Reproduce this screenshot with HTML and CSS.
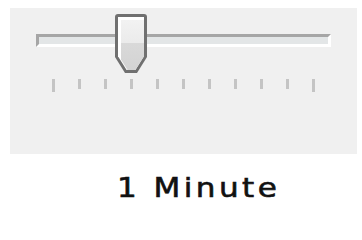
FILE: index.html
```
<!DOCTYPE html>
<html>
<head>
<meta charset="utf-8">
<link rel="stylesheet" href="styles.css">
</head>
<body>
<div class="panel">
  <div class="track"></div>
  <div class="ticks">
    <span class="tick long"></span><span class="tick"></span><span class="tick"></span><span class="tick"></span><span class="tick"></span><span class="tick"></span><span class="tick"></span><span class="tick"></span><span class="tick"></span><span class="tick"></span><span class="tick long"></span>
  </div>
  <svg class="thumb" width="34" height="61" viewBox="0 0 34 61">
    <defs>
      <linearGradient id="tf" x1="0" y1="0" x2="0" y2="1">
        <stop offset="0" stop-color="#f2f2f2"/>
        <stop offset="0.45" stop-color="#ebebeb"/>
        <stop offset="0.46" stop-color="#d9d9d9"/>
        <stop offset="1" stop-color="#d3d3d3"/>
      </linearGradient>
    </defs>
    <path d="M3 0 H29 Q32 0 32 3 V43 L22 59 H10 L0 43 V3 Q0 0 3 0 Z" fill="#707070"/>
    <path d="M3 3 H29 V42.2 L20.4 56 H11.6 L3 42.2 Z" fill="#ffffff"/>
    <path d="M6 6 H29 V42.2 L20.4 56 H12.6 L6 45.4 Z" fill="url(#tf)"/>
  </svg>
</div>
<div class="label"><span class="label-text">1 Minute</span></div>
</body>
</html>
```
FILE: styles.css
```
body {
  margin: 0;
  background: #ffffff;
}
.panel {
  position: relative;
  margin: 8px 0 0 10px;
  width: 347px;
  height: 146px;
  box-sizing: border-box;
  padding: 26px 0 0 26px;
  background: #f0f0f0;
}
.track {
  width: 295px;
  height: 13px;
  box-sizing: border-box;
  border-top: 3px solid #a6a6a6;
  border-left: 3px solid #a6a6a6;
  border-right: 3px solid #ffffff;
  border-bottom: 3px solid #ffffff;
  background: #e3e6e7;
}
.ticks {
  display: flex;
  align-items: flex-start;
  gap: 23px;
  margin: 32px 0 0 16px;
}
.tick {
  width: 3px;
  height: 10px;
  background: #c4c4c4;
}
.tick.long {
  height: 13px;
}
.thumb {
  position: absolute;
  left: 105px;
  top: 6px;
}
.label {
  margin: 20px 0 0 117px;
  font-family: "DejaVu Sans", sans-serif;
  font-size: 27px;
  line-height: 28px;
  color: #111111;
}
.label-text {
  display: inline-block;
  letter-spacing: 3px;
  transform: scaleX(1.15);
  transform-origin: left center;
  -webkit-text-stroke: 0.6px #111111;
}
```
